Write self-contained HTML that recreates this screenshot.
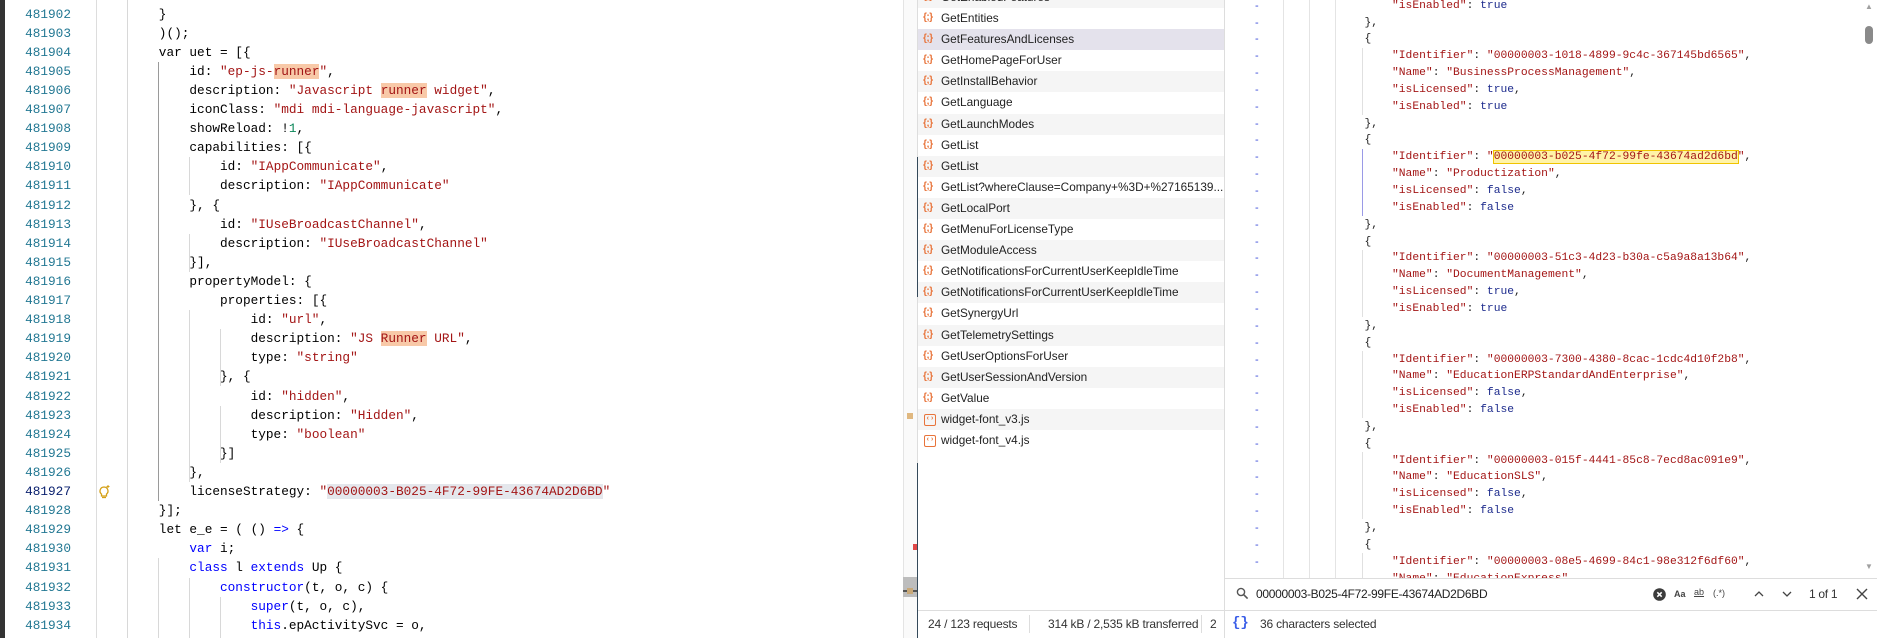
<!DOCTYPE html>
<html><head><meta charset="utf-8">
<style>
*{margin:0;padding:0;box-sizing:border-box}
body{width:1877px;height:638px;overflow:hidden;background:#fff;position:relative;font-family:"Liberation Sans",sans-serif}
.ab{position:absolute}
.ed{position:absolute;left:0;top:0;width:903px;height:638px;overflow:hidden;background:#fff}
.n{position:absolute;left:0;width:71px;text-align:right;font:12.75px/19px "Liberation Mono",monospace;color:#237893}
.c{position:absolute;white-space:pre;font:12.75px/19px "Liberation Mono",monospace;color:#000}
.s{color:#a31515}.k{color:#0000ff}.g{color:#098658}
.hl{background:#f8c9a8}
.gd{position:absolute;width:1px;background:#d8d8d8}
.lst{position:absolute;left:918px;top:0;width:306px;height:611px;overflow:hidden;background:#fff}
.r{position:absolute;left:0;width:306px;height:21.1px;font:11.8px/21px "Liberation Sans",sans-serif;color:#222;white-space:nowrap}
.r.a{background:#f5f5f5}
.r.sel{background:#e4e2ec}
.r i{position:absolute;left:5px;top:0;font:bold 10px/20px "Liberation Sans",sans-serif;color:#e8743b;font-style:normal;letter-spacing:-0.5px}
.r b{position:absolute;left:6px;top:5px;width:12px;height:12px;border:1.5px solid #e8743b;border-radius:2px;font:bold 7px/9px "Liberation Mono";color:#e8743b;text-align:center}
.r span{position:absolute;left:23px}
.js{position:absolute;white-space:pre;font:11.3px/16.85px "Liberation Mono",monospace;color:#a31515}
.js .p{color:#222}.js .b{color:#1c2a8c}
.dash{position:absolute;left:1255px;font:11px/16.85px "Liberation Sans";color:#3a4bd8}
</style></head><body>

<div class="ed">
<div class="ab" style="left:0;top:0;width:5px;height:638px;background:#333"></div>
<div class="ab" style="left:96px;top:0;width:1px;height:638px;background:#ddd"></div>
<div class="gd" style="left:127px;top:0;height:638px"></div>
<div class="gd" style="left:158px;top:61.8px;height:439.3px;background:#9a9a9a"></div>
<div class="gd" style="left:189px;top:157.3px;height:38.2px"></div>
<div class="gd" style="left:189px;top:233.7px;height:38.2px"></div>
<div class="gd" style="left:189px;top:310.1px;height:172px"></div>
<div class="gd" style="left:220px;top:329.2px;height:57.3px"></div>
<div class="gd" style="left:220px;top:405.6px;height:57.3px"></div>
<div class="gd" style="left:158px;top:558.4px;height:80px"></div>
<div class="gd" style="left:189px;top:577.5px;height:61px"></div>
<div class="gd" style="left:220px;top:596.6px;height:42px"></div>

<div class="n" style="top:4.5px">481902</div>
<div class="n" style="top:23.6px">481903</div>
<div class="n" style="top:42.7px">481904</div>
<div class="n" style="top:61.8px">481905</div>
<div class="n" style="top:80.9px">481906</div>
<div class="n" style="top:100px">481907</div>
<div class="n" style="top:119.1px">481908</div>
<div class="n" style="top:138.2px">481909</div>
<div class="n" style="top:157.3px">481910</div>
<div class="n" style="top:176.4px">481911</div>
<div class="n" style="top:195.5px">481912</div>
<div class="n" style="top:214.6px">481913</div>
<div class="n" style="top:233.7px">481914</div>
<div class="n" style="top:252.8px">481915</div>
<div class="n" style="top:271.9px">481916</div>
<div class="n" style="top:291px">481917</div>
<div class="n" style="top:310.1px">481918</div>
<div class="n" style="top:329.2px">481919</div>
<div class="n" style="top:348.3px">481920</div>
<div class="n" style="top:367.4px">481921</div>
<div class="n" style="top:386.5px">481922</div>
<div class="n" style="top:405.6px">481923</div>
<div class="n" style="top:424.7px">481924</div>
<div class="n" style="top:443.8px">481925</div>
<div class="n" style="top:462.9px">481926</div>
<div class="n" style="top:482px;color:#0b216f">481927</div>
<div class="n" style="top:501.1px">481928</div>
<div class="n" style="top:520.2px">481929</div>
<div class="n" style="top:539.3px">481930</div>
<div class="n" style="top:558.4px">481931</div>
<div class="n" style="top:577.5px">481932</div>
<div class="n" style="top:596.6px">481933</div>
<div class="n" style="top:615.7px">481934</div>
<div class="n" style="top:634.8px">481935</div>

<svg class="ab" style="left:97px;top:484px" width="14" height="16" viewBox="0 0 14 16"><path d="M7 3a4 4 0 0 0-2.5 7.1V12h5v-1.9A4 4 0 0 0 7 3z" fill="none" stroke="#d4a017" stroke-width="1.3"/><path d="M5 13.5h4" stroke="#d4a017" stroke-width="1.3"/><path d="M11 1v3M9.5 2.5h3" stroke="#d4a017" stroke-width="1"/></svg>

<div class="c" style="top:4.5px;left:158.8px">}</div>
<div class="c" style="top:23.6px;left:158.8px">)();</div>
<div class="c" style="top:42.7px;left:158.8px">var uet = [{</div>
<div class="c" style="top:61.8px;left:189.4px">id: <span class="s">"ep-js-<span class="hl">runner</span>"</span>,</div>
<div class="c" style="top:80.9px;left:189.4px">description: <span class="s">"Javascript <span class="hl">runner</span> widget"</span>,</div>
<div class="c" style="top:100px;left:189.4px">iconClass: <span class="s">"mdi mdi-language-javascript"</span>,</div>
<div class="c" style="top:119.1px;left:189.4px">showReload: !<span class="g">1</span>,</div>
<div class="c" style="top:138.2px;left:189.4px">capabilities: [{</div>
<div class="c" style="top:157.3px;left:220px">id: <span class="s">"IAppCommunicate"</span>,</div>
<div class="c" style="top:176.4px;left:220px">description: <span class="s">"IAppCommunicate"</span></div>
<div class="c" style="top:195.5px;left:189.4px">}, {</div>
<div class="c" style="top:214.6px;left:220px">id: <span class="s">"IUseBroadcastChannel"</span>,</div>
<div class="c" style="top:233.7px;left:220px">description: <span class="s">"IUseBroadcastChannel"</span></div>
<div class="c" style="top:252.8px;left:189.4px">}],</div>
<div class="c" style="top:271.9px;left:189.4px">propertyModel: {</div>
<div class="c" style="top:291px;left:220px">properties: [{</div>
<div class="c" style="top:310.1px;left:250.6px">id: <span class="s">"url"</span>,</div>
<div class="c" style="top:329.2px;left:250.6px">description: <span class="s">"JS <span class="hl">Runner</span> URL"</span>,</div>
<div class="c" style="top:348.3px;left:250.6px">type: <span class="s">"string"</span></div>
<div class="c" style="top:367.4px;left:220px">}, {</div>
<div class="c" style="top:386.5px;left:250.6px">id: <span class="s">"hidden"</span>,</div>
<div class="c" style="top:405.6px;left:250.6px">description: <span class="s">"Hidden"</span>,</div>
<div class="c" style="top:424.7px;left:250.6px">type: <span class="s">"boolean"</span></div>
<div class="c" style="top:443.8px;left:220px">}]</div>
<div class="c" style="top:462.9px;left:189.4px">},</div>
<div class="c" style="top:482px;left:189.4px">licenseStrategy: <span class="s">"<span style="background:#e4e7ec">00000003-B025-4F72-99FE-43674AD2D6BD</span>"</span></div>
<div class="c" style="top:501.1px;left:158.8px">}];</div>
<div class="c" style="top:520.2px;left:158.8px">let e_e = ( () <span class="k">=&gt;</span> {</div>
<div class="c" style="top:539.3px;left:189.4px"><span class="k">var</span> i;</div>
<div class="c" style="top:558.4px;left:189.4px"><span class="k">class</span> l <span class="k">extends</span> Up {</div>
<div class="c" style="top:577.5px;left:220px"><span class="k">constructor</span>(t, o, c) {</div>
<div class="c" style="top:596.6px;left:250.6px"><span class="k">super</span>(t, o, c),</div>
<div class="c" style="top:615.7px;left:250.6px"><span class="k">this</span>.epActivitySvc = o,</div>
<div class="c" style="top:634.8px;left:250.6px"><span class="k">this</span>.activityName = <span class="s">"WidgetRegistry"</span></div>
</div>

<!-- editor scrollbar -->
<div class="ab" style="left:903px;top:0;width:15px;height:638px;background:#fafafa;border-left:1px solid #e4e4e4"></div>
<div class="ab" style="left:907px;top:413px;width:6px;height:6px;background:#e0b880"></div>
<div class="ab" style="left:913px;top:544px;width:4px;height:6px;background:#e04848"></div>
<div class="ab" style="left:903px;top:577px;width:15px;height:20px;background:#bdbdbd"></div>
<div class="ab" style="left:903px;top:590px;width:15px;height:2px;background:#555"></div>
<div class="ab" style="left:907px;top:588px;width:6px;height:6px;background:#c8a878"></div>

<!-- network list -->
<div class="lst">
<div class="r a" style="top:-13px"><i>{;}</i><span>GetEnabledFeatures</span></div>
<div class="r" style="top:8px"><i>{;}</i><span>GetEntities</span></div>
<div class="r sel" style="top:29.1px"><i>{;}</i><span>GetFeaturesAndLicenses</span></div>
<div class="r" style="top:50.2px"><i>{;}</i><span>GetHomePageForUser</span></div>
<div class="r a" style="top:71.3px"><i>{;}</i><span>GetInstallBehavior</span></div>
<div class="r" style="top:92.4px"><i>{;}</i><span>GetLanguage</span></div>
<div class="r a" style="top:113.5px"><i>{;}</i><span>GetLaunchModes</span></div>
<div class="r" style="top:134.6px"><i>{;}</i><span>GetList</span></div>
<div class="r a" style="top:155.7px"><i>{;}</i><span>GetList</span></div>
<div class="r" style="top:176.8px"><i>{;}</i><span>GetList?whereClause=Company+%3D+%27165139...</span></div>
<div class="r a" style="top:197.9px"><i>{;}</i><span>GetLocalPort</span></div>
<div class="r" style="top:219px"><i>{;}</i><span>GetMenuForLicenseType</span></div>
<div class="r a" style="top:240.1px"><i>{;}</i><span>GetModuleAccess</span></div>
<div class="r" style="top:261.2px"><i>{;}</i><span>GetNotificationsForCurrentUserKeepIdleTime</span></div>
<div class="r a" style="top:282.3px"><i>{;}</i><span>GetNotificationsForCurrentUserKeepIdleTime</span></div>
<div class="r" style="top:303.4px"><i>{;}</i><span>GetSynergyUrl</span></div>
<div class="r a" style="top:324.5px"><i>{;}</i><span>GetTelemetrySettings</span></div>
<div class="r" style="top:345.6px"><i>{;}</i><span>GetUserOptionsForUser</span></div>
<div class="r a" style="top:366.7px"><i>{;}</i><span>GetUserSessionAndVersion</span></div>
<div class="r" style="top:387.8px"><i>{;}</i><span>GetValue</span></div>
<div class="r a" style="top:408.9px"><b>‹›</b><span>widget-font_v3.js</span></div>
<div class="r" style="top:430px"><b>‹›</b><span>widget-font_v4.js</span></div>
</div>
<div class="ab" style="left:917px;top:0;width:1px;height:638px;background:#ddd"></div>
<div class="ab" style="left:917px;top:157px;width:1px;height:140px;background:#34495a"></div>
<div class="ab" style="left:917px;top:463px;width:1px;height:175px;background:#34495a"></div>
<div class="ab" style="left:1224px;top:0;width:1px;height:638px;background:#ddd"></div>

<!-- response -->
<div class="ab" style="left:1283px;top:0;width:1px;height:578px;background:#e4e4e4"></div>
<div class="ab" style="left:1309px;top:0;width:1px;height:578px;background:#e4e4e4"></div>
<div class="ab" style="left:1335px;top:0;width:1px;height:578px;background:#e4e4e4"></div>
<div class="ab" style="left:1362px;top:48px;width:1px;height:67px;background:#e0e0e0"></div>
<div class="ab" style="left:1362px;top:149px;width:1px;height:67px;background:#9a9ae6"></div>
<div class="ab" style="left:1362px;top:250px;width:1px;height:67px;background:#e0e0e0"></div>
<div class="ab" style="left:1362px;top:351px;width:1px;height:67px;background:#e0e0e0"></div>
<div class="ab" style="left:1362px;top:452px;width:1px;height:67px;background:#e0e0e0"></div>
<div class="ab" style="left:1362px;top:553px;width:1px;height:25px;background:#e0e0e0"></div>

<div class="ab" style="left:0;top:0;width:1877px;height:578px;overflow:hidden;pointer-events:none">
<div class="dash" style="top:-2.4px">-</div><div class="dash" style="top:14.5px">-</div><div class="dash" style="top:31.3px">-</div><div class="dash" style="top:48.2px">-</div><div class="dash" style="top:65px">-</div><div class="dash" style="top:81.9px">-</div><div class="dash" style="top:98.7px">-</div><div class="dash" style="top:115.6px">-</div><div class="dash" style="top:132.4px">-</div><div class="dash" style="top:149.3px">-</div><div class="dash" style="top:166.1px">-</div><div class="dash" style="top:183px">-</div><div class="dash" style="top:199.8px">-</div><div class="dash" style="top:216.7px">-</div><div class="dash" style="top:233.5px">-</div><div class="dash" style="top:250.4px">-</div><div class="dash" style="top:267.2px">-</div><div class="dash" style="top:284.1px">-</div><div class="dash" style="top:300.9px">-</div><div class="dash" style="top:317.8px">-</div><div class="dash" style="top:334.6px">-</div><div class="dash" style="top:351.5px">-</div><div class="dash" style="top:368.3px">-</div><div class="dash" style="top:385.2px">-</div><div class="dash" style="top:402px">-</div><div class="dash" style="top:418.9px">-</div><div class="dash" style="top:435.7px">-</div><div class="dash" style="top:452.6px">-</div><div class="dash" style="top:469.4px">-</div><div class="dash" style="top:486.3px">-</div><div class="dash" style="top:503.1px">-</div><div class="dash" style="top:520px">-</div><div class="dash" style="top:536.8px">-</div><div class="dash" style="top:553.7px">-</div><div class="dash" style="top:570.5px">-</div>

<div class="js" style="top:-2.4px;left:1392px">"isEnabled"<span class="p">: </span><span class="b">true</span></div>
<div class="js p" style="top:14.5px;left:1364.5px;color:#222">},</div>
<div class="js" style="top:31.3px;left:1364.5px;color:#222">{</div>
<div class="js" style="top:48.2px;left:1392px">"Identifier"<span class="p">: </span>"00000003-1018-4899-9c4c-367145bd6565"<span class="p">,</span></div>
<div class="js" style="top:65px;left:1392px">"Name"<span class="p">: </span>"BusinessProcessManagement"<span class="p">,</span></div>
<div class="js" style="top:81.9px;left:1392px">"isLicensed"<span class="p">: </span><span class="b">true</span><span class="p">,</span></div>
<div class="js" style="top:98.7px;left:1392px">"isEnabled"<span class="p">: </span><span class="b">true</span></div>
<div class="js" style="top:115.6px;left:1364.5px;color:#222">},</div>
<div class="js" style="top:132.4px;left:1364.5px;color:#222">{</div>
<div class="js" style="top:149.3px;left:1392px">"Identifier"<span class="p">: </span>"<span style="background:#fff3a8;outline:1px solid #f0c400">00000003-b025-4f72-99fe-43674ad2d6bd</span>"<span class="p">,</span></div>
<div class="js" style="top:166.1px;left:1392px">"Name"<span class="p">: </span>"Productization"<span class="p">,</span></div>
<div class="js" style="top:183px;left:1392px">"isLicensed"<span class="p">: </span><span class="b">false</span><span class="p">,</span></div>
<div class="js" style="top:199.8px;left:1392px">"isEnabled"<span class="p">: </span><span class="b">false</span></div>
<div class="js" style="top:216.7px;left:1364.5px;color:#222">},</div>
<div class="js" style="top:233.5px;left:1364.5px;color:#222">{</div>
<div class="js" style="top:250.4px;left:1392px">"Identifier"<span class="p">: </span>"00000003-51c3-4d23-b30a-c5a9a8a13b64"<span class="p">,</span></div>
<div class="js" style="top:267.2px;left:1392px">"Name"<span class="p">: </span>"DocumentManagement"<span class="p">,</span></div>
<div class="js" style="top:284.1px;left:1392px">"isLicensed"<span class="p">: </span><span class="b">true</span><span class="p">,</span></div>
<div class="js" style="top:300.9px;left:1392px">"isEnabled"<span class="p">: </span><span class="b">true</span></div>
<div class="js" style="top:317.8px;left:1364.5px;color:#222">},</div>
<div class="js" style="top:334.6px;left:1364.5px;color:#222">{</div>
<div class="js" style="top:351.5px;left:1392px">"Identifier"<span class="p">: </span>"00000003-7300-4380-8cac-1cdc4d10f2b8"<span class="p">,</span></div>
<div class="js" style="top:368.3px;left:1392px">"Name"<span class="p">: </span>"EducationERPStandardAndEnterprise"<span class="p">,</span></div>
<div class="js" style="top:385.2px;left:1392px">"isLicensed"<span class="p">: </span><span class="b">false</span><span class="p">,</span></div>
<div class="js" style="top:402px;left:1392px">"isEnabled"<span class="p">: </span><span class="b">false</span></div>
<div class="js" style="top:418.9px;left:1364.5px;color:#222">},</div>
<div class="js" style="top:435.7px;left:1364.5px;color:#222">{</div>
<div class="js" style="top:452.6px;left:1392px">"Identifier"<span class="p">: </span>"00000003-015f-4441-85c8-7ecd8ac091e9"<span class="p">,</span></div>
<div class="js" style="top:469.4px;left:1392px">"Name"<span class="p">: </span>"EducationSLS"<span class="p">,</span></div>
<div class="js" style="top:486.3px;left:1392px">"isLicensed"<span class="p">: </span><span class="b">false</span><span class="p">,</span></div>
<div class="js" style="top:503.1px;left:1392px">"isEnabled"<span class="p">: </span><span class="b">false</span></div>
<div class="js" style="top:520px;left:1364.5px;color:#222">},</div>
<div class="js" style="top:536.8px;left:1364.5px;color:#222">{</div>
<div class="js" style="top:553.7px;left:1392px">"Identifier"<span class="p">: </span>"00000003-08e5-4699-84c1-98e312f6df60"<span class="p">,</span></div>
<div class="js" style="top:570.5px;left:1392px">"Name"<span class="p">: </span>"EducationExpress"<span class="p">,</span></div>
</div>

<!-- response scrollbar -->
<div class="ab" style="left:1862px;top:0;width:15px;height:578px;background:#fff"></div>
<div class="ab" style="left:1865px;top:2px;font-size:8px;color:#a0a0a0">▲</div>
<div class="ab" style="left:1865px;top:26px;width:8px;height:18px;border-radius:4px;background:#8a8a8a"></div>
<div class="ab" style="left:1865px;top:562px;font-size:8px;color:#a0a0a0">▼</div>

<!-- search bar -->
<div class="ab" style="left:1224px;top:578px;width:653px;height:1px;background:#ddd"></div>
<svg class="ab" style="left:1236px;top:587px" width="13" height="13" viewBox="0 0 13 13"><circle cx="5" cy="5" r="3.6" fill="none" stroke="#555" stroke-width="1.4"/><path d="M7.6 7.6l4 4" stroke="#555" stroke-width="1.6"/></svg>
<div class="ab" style="left:1256px;top:586px;font:12px/16px 'Liberation Sans',sans-serif;color:#222;letter-spacing:-0.3px">00000003-B025-4F72-99FE-43674AD2D6BD</div>
<svg class="ab" style="left:1653px;top:588px" width="13" height="13" viewBox="0 0 13 13"><circle cx="6.5" cy="6.5" r="6.3" fill="#3c3c3c"/><path d="M4.3 4.3l4.4 4.4M8.7 4.3l-4.4 4.4" stroke="#fff" stroke-width="1.5"/></svg>
<div class="ab" style="left:1674px;top:588px;font:bold 9px/12px 'Liberation Sans';color:#444">Aa</div>
<div class="ab" style="left:1694px;top:586px;font:9px/12px 'Liberation Sans';color:#444;text-decoration:underline">ab</div>
<div class="ab" style="left:1713px;top:587px;font:9px/12px 'Liberation Sans';color:#444">(.*)</div>
<svg class="ab" style="left:1753px;top:590px" width="12" height="8" viewBox="0 0 12 8"><path d="M2 6l4-4 4 4" fill="none" stroke="#444" stroke-width="1.3"/></svg>
<svg class="ab" style="left:1781px;top:590px" width="12" height="8" viewBox="0 0 12 8"><path d="M2 2l4 4 4-4" fill="none" stroke="#444" stroke-width="1.3"/></svg>
<div class="ab" style="left:1809px;top:586px;font:12px/16px 'Liberation Sans';color:#333;letter-spacing:-0.3px">1 of 1</div>
<svg class="ab" style="left:1856px;top:588px" width="12" height="12" viewBox="0 0 12 12"><path d="M1 1l10 10M11 1L1 11" stroke="#444" stroke-width="1.4"/></svg>

<!-- status bar -->
<div class="ab" style="left:918px;top:610px;width:959px;height:1px;background:#ddd"></div>
<div class="ab" style="left:928px;top:616px;font:12px/16px 'Liberation Sans',sans-serif;color:#333;letter-spacing:-0.2px">24 / 123 requests</div>
<div class="ab" style="left:1029px;top:615px;width:1px;height:18px;background:#ddd"></div>
<div class="ab" style="left:1048px;top:616px;font:12px/16px 'Liberation Sans',sans-serif;color:#333;letter-spacing:-0.2px">314 kB / 2,535 kB transferred</div>
<div class="ab" style="left:1201px;top:615px;width:1px;height:18px;background:#ddd"></div>
<div class="ab" style="left:1210px;top:616px;font:12px/16px 'Liberation Sans',sans-serif;color:#333">2</div>
<div class="ab" style="left:1232px;top:613px;font:bold 14px/20px 'Liberation Mono';color:#3a5ee8">{}</div>
<div class="ab" style="left:1260px;top:616px;font:12px/16px 'Liberation Sans',sans-serif;color:#333;letter-spacing:-0.2px">36 characters selected</div>
</body></html>
